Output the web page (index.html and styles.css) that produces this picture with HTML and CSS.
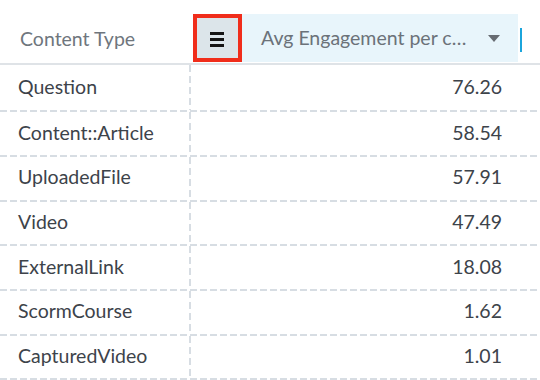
FILE: index.html
```html
<!DOCTYPE html>
<html>
<head>
<meta charset="utf-8">
<link rel="stylesheet" href="styles.css">
</head>
<body>
<div class="grid">
  <div class="head">
    <div class="hcell dim">Content Type</div>
    <div class="hcell metric-col">
      <div class="menu-btn">
        <svg width="14" height="15" viewBox="0 0 14 15"><rect x="0" y="0" width="14" height="3"/><rect x="0" y="6" width="14" height="3"/><rect x="0" y="12" width="14" height="3"/></svg>
      </div>
      <div class="metric">
        <span class="metric-name">Avg Engagement per c…</span>
        <span class="caret"></span>
      </div>
      <span class="resize"></span>
    </div>
  </div>
  <div class="body">
    <div class="row first"><div class="c1">Question</div><div class="c2">76.26</div></div>
    <div class="row"><div class="c1">Content::Article</div><div class="c2">58.54</div></div>
    <div class="row"><div class="c1">UploadedFile</div><div class="c2">57.91</div></div>
    <div class="row"><div class="c1">Video</div><div class="c2">47.49</div></div>
    <div class="row"><div class="c1">ExternalLink</div><div class="c2">18.08</div></div>
    <div class="row"><div class="c1">ScormCourse</div><div class="c2">1.62</div></div>
    <div class="row"><div class="c1">CapturedVideo</div><div class="c2">1.01</div></div>
  </div>
</div>
</body>
</html>
```
FILE: styles.css
```css
html, body {
  margin: 0;
  padding: 0;
  background: #ffffff;
}
body {
  width: 540px;
  height: 380px;
  overflow: hidden;
  font-family: Lato, "Open Sans", sans-serif;
  font-size: 19.5px;
  color: #3d434a;
}
.head {
  display: grid;
  grid-template-columns: 191px 1fr;
  height: 63px;
  border-bottom: 2px solid #dfe3e7;
}
.hcell.dim {
  color: #6f767d;
  padding-left: 20px;
  display: flex;
  align-items: center;
  padding-top: 14px;
}
.metric-col {
  display: flex;
  align-items: flex-start;
  padding-top: 14px;
}
.menu-btn {
  margin-left: 2px;
  width: 41px;
  height: 40px;
  border: 4px solid #f02d1b;
  background: #dce5ea;
  display: flex;
  align-items: center;
  justify-content: center;
}
.menu-btn svg {
  fill: #151515;
  margin-top: 3px;
  margin-left: -1px;
}
.metric {
  width: 276px;
  height: 48px;
  background: #e8f5fb;
  color: #6b7279;
  display: flex;
  align-items: center;
  justify-content: space-between;
  padding: 0 18px 2px 19px;
  box-sizing: border-box;
}
.caret {
  width: 0;
  height: 0;
  border-left: 6px solid transparent;
  border-right: 6px solid transparent;
  border-top: 7px solid #676c72;
  margin-top: 2px;
}
.resize {
  width: 2px;
  height: 24px;
  margin-left: 2px;
  margin-top: 14px;
  background: #1ba5dc;
}
.row {
  display: grid;
  grid-template-columns: 191px 1fr;
  height: 44.7px;
  box-sizing: border-box;
  padding-bottom: 2px;
  background-image: repeating-linear-gradient(to right, #d7dde3 0 7px, transparent 7px 10px);
  background-repeat: no-repeat;
  background-size: 100% 2px;
  background-position: left bottom;
}
.row.first {
  height: 47.3px;
}
.c1, .c2 {
  display: flex;
  align-items: center;
  padding-bottom: 3px;
}
.c1 {
  padding-left: 18px;
  background-image: repeating-linear-gradient(to bottom, #d7dde3 0 7px, transparent 7px 11px);
  background-repeat: no-repeat;
  background-size: 2px 100%;
  background-position: right top;
}
.c2 {
  justify-content: flex-end;
  padding-right: 38px;
}
```
